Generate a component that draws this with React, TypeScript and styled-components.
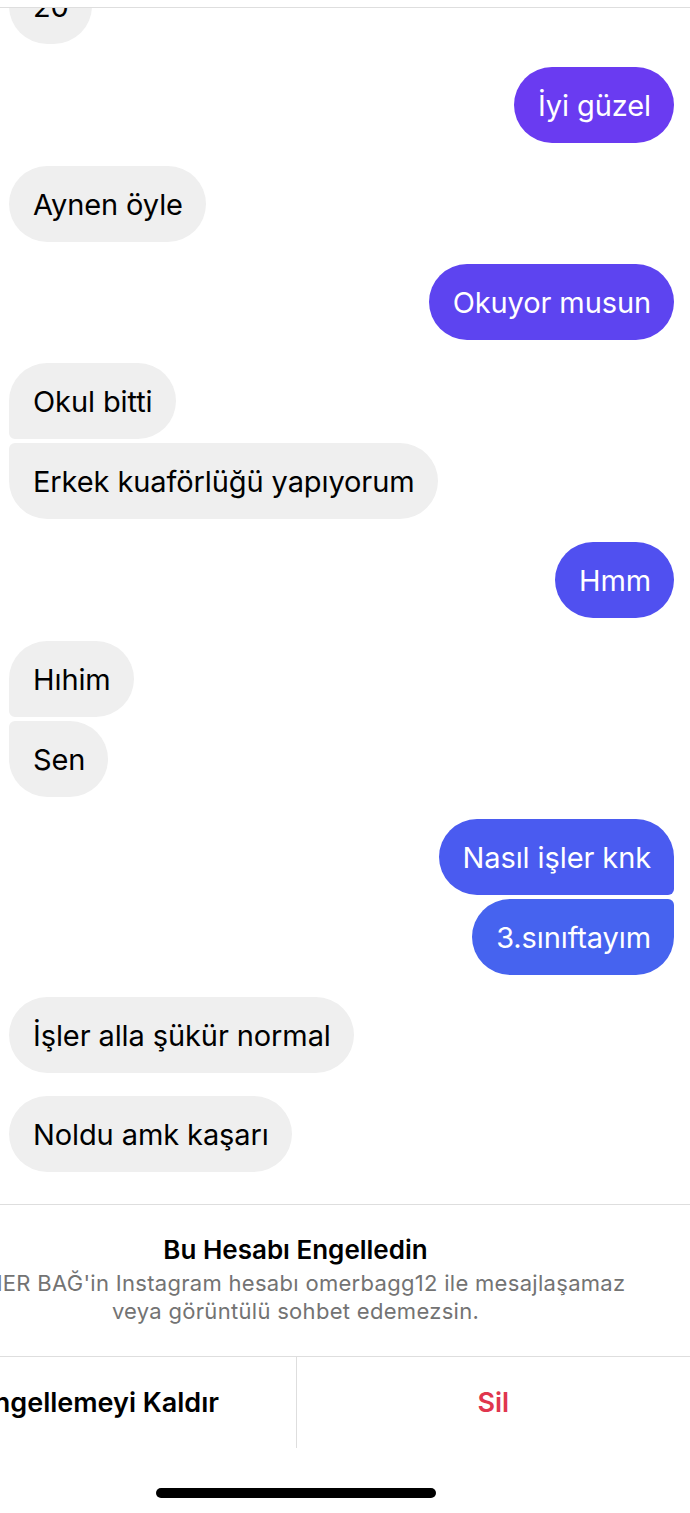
import React from "react";
import styled, { createGlobalStyle } from "styled-components";

const Global = createGlobalStyle`
  html, body { margin: 0; padding: 0; background: #ffffff; }
  body { font-family: Inter, "Noto Sans", Roboto, sans-serif; -webkit-font-smoothing: antialiased; }
`;

const Page = styled.div`
  width: 690px;
  height: 1513px;
  overflow: hidden;
  display: flex;
  flex-direction: column;
  background: #ffffff;
`;

const TopBar = styled.div`
  height: 7px;
  flex: none;
  background: #ffffff;
  border-bottom: 1px solid #dedede;
  position: relative;
  z-index: 2;
`;

const Chat = styled.div`
  flex: none;
  height: 1196px;
  overflow: hidden;
  display: flex;
  flex-direction: column;
  padding: 0 16px 0 9px;
`;

const Row = styled.div<{ $mine?: boolean; $gap: number }>`
  display: flex;
  justify-content: ${(p) => (p.$mine ? "flex-end" : "flex-start")};
  margin-top: ${(p) => p.$gap}px;
`;

type Pos = "single" | "first" | "last";

const radius = (mine: boolean, pos: Pos) => {
  const big = 38;
  const small = 6;
  if (pos === "single") return `${big}px`;
  if (mine) {
    return pos === "first"
      ? `${big}px ${big}px ${small}px ${big}px`
      : `${big}px ${small}px ${big}px ${big}px`;
  }
  return pos === "first"
    ? `${big}px ${big}px ${big}px ${small}px`
    : `${small}px ${big}px ${big}px ${big}px`;
};

const Bubble = styled.div<{ $mine?: boolean; $bg?: string; $pos: Pos }>`
  height: 76px;
  box-sizing: border-box;
  display: flex;
  align-items: center;
  padding: 0 23px 0 24px;
  border-radius: ${(p) => radius(!!p.$mine, p.$pos)};
  background: ${(p) => (p.$mine ? p.$bg : "#efefef")};
  color: ${(p) => (p.$mine ? "#ffffff" : "#000000")};
  font-size: 29px;
  font-weight: 400;
  letter-spacing: -0.1px;
  white-space: nowrap;
`;

const Divider = styled.div`
  height: 1px;
  background: #dedede;
  flex: none;
`;

const Blocked = styled.div`
  margin-left: -99px;
  width: 789px;
  flex: 1;
  display: flex;
  flex-direction: column;
  align-items: center;
`;

const Notice = styled.div`
  height: 151px;
  display: flex;
  flex-direction: column;
  align-items: center;
  padding-top: 29px;
  box-sizing: border-box;
  width: 100%;
`;

const Title = styled.div`
  font-size: 26px;
  font-weight: 600;
  color: #000;
  line-height: 32px;
`;

const Desc = styled.div`
  font-size: 22px;
  color: #737373;
  line-height: 28px;
  text-align: center;
  letter-spacing: 0.3px;
  margin-top: 3px;
`;

const Actions = styled.div`
  width: 100%;
  display: grid;
  grid-template-columns: 1fr 1fr;
  height: 91px;
  border-top: 1px solid #dedede;
`;

const Action = styled.div<{ $danger?: boolean }>`
  display: flex;
  align-items: center;
  justify-content: center;
  font-size: 27px;
  font-weight: 600;
  color: ${(p) => (p.$danger ? "#e0364e" : "#000")};
  & + & {
    border-left: 1px solid #dedede;
  }
`;

const HomeArea = styled.div`
  flex: 1;
  width: 100%;
  display: flex;
  justify-content: center;
  padding-top: 40px;
  box-sizing: border-box;
`;

const HomeBar = styled.div`
  width: 280px;
  height: 10px;
  border-radius: 5px;
  background: #000;
`;

type Msg = { text: string; mine?: boolean; pos: Pos; gap: number; bg?: string };

const messages: Msg[] = [
  { text: "20", pos: "single", gap: -40 },
  { text: "İyi güzel", mine: true, pos: "single", gap: 23, bg: "#6a3bf1" },
  { text: "Aynen öyle", pos: "single", gap: 23 },
  { text: "Okuyor musun", mine: true, pos: "single", gap: 22, bg: "#5d44f0" },
  { text: "Okul bitti", pos: "first", gap: 23 },
  { text: "Erkek kuaförlüğü yapıyorum", pos: "last", gap: 4 },
  { text: "Hmm", mine: true, pos: "single", gap: 23, bg: "#5050f0" },
  { text: "Hıhim", pos: "first", gap: 23 },
  { text: "Sen", pos: "last", gap: 4 },
  { text: "Nasıl işler knk", mine: true, pos: "first", gap: 22, bg: "#4a5bf0" },
  { text: "3.sınıftayım", mine: true, pos: "last", gap: 4, bg: "#4663ef" },
  { text: "İşler alla şükür normal", pos: "single", gap: 22 },
  { text: "Noldu amk kaşarı", pos: "single", gap: 23 },
];

export default function App() {
  return (
    <Page>
      <Global />
      <TopBar />
      <Chat>
        {messages.map((m, i) => (
          <Row key={i} $mine={m.mine} $gap={m.gap}>
            <Bubble $mine={m.mine} $bg={m.bg} $pos={m.pos}>
              {m.text}
            </Bubble>
          </Row>
        ))}
      </Chat>
      <Divider />
      <Blocked>
        <Notice>
          <Title>Bu Hesabı Engelledin</Title>
          <Desc>
            ÖMER BAĞ'in Instagram hesabı omerbagg12 ile mesajlaşamaz
            <br />
            veya görüntülü sohbet edemezsin.
          </Desc>
        </Notice>
        <Actions>
          <Action>Engellemeyi Kaldır</Action>
          <Action $danger>Sil</Action>
        </Actions>
        <HomeArea>
          <HomeBar />
        </HomeArea>
      </Blocked>
    </Page>
  );
}
